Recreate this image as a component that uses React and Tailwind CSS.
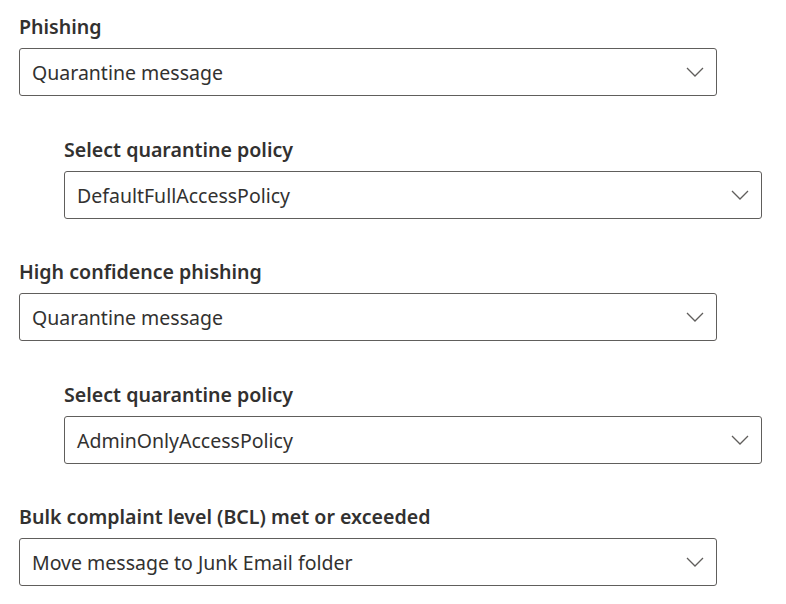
import React from "react";

function Chevron() {
  return (
    <svg width="18" height="10" viewBox="0 0 18 10" fill="none" className="shrink-0">
      <path d="M1 1 L9 9 L17 1" stroke="#605e5c" strokeWidth="1.3" />
    </svg>
  );
}

function Field({ label, value, indent }) {
  return (
    <div className={indent ? "pl-[45px]" : ""}>
      <div className="text-[19.6px] leading-[28px] font-semibold text-[#323130] mb-[7px]">{label}</div>
      <div className="w-[698px] h-[48px] border border-[#605e5c] rounded-[3px] flex items-center justify-between pl-[12px] pr-[12px]">
        <span className="text-[19.5px] text-[#323130] pt-[2px]">{value}</span>
        <Chevron />
      </div>
    </div>
  );
}

export default function App() {
  return (
    <div
      className="w-[786px] h-[604px] bg-white pl-[19px] pt-[13px] flex flex-col gap-[39.5px]"
      style={{ fontFamily: '"Noto Sans", "Open Sans", sans-serif' }}
    >
      <Field label="Phishing" value="Quarantine message" />
      <Field label="Select quarantine policy" value="DefaultFullAccessPolicy" indent />
      <Field label="High confidence phishing" value="Quarantine message" />
      <Field label="Select quarantine policy" value="AdminOnlyAccessPolicy" indent />
      <Field label="Bulk complaint level (BCL) met or exceeded" value="Move message to Junk Email folder" />
    </div>
  );
}
